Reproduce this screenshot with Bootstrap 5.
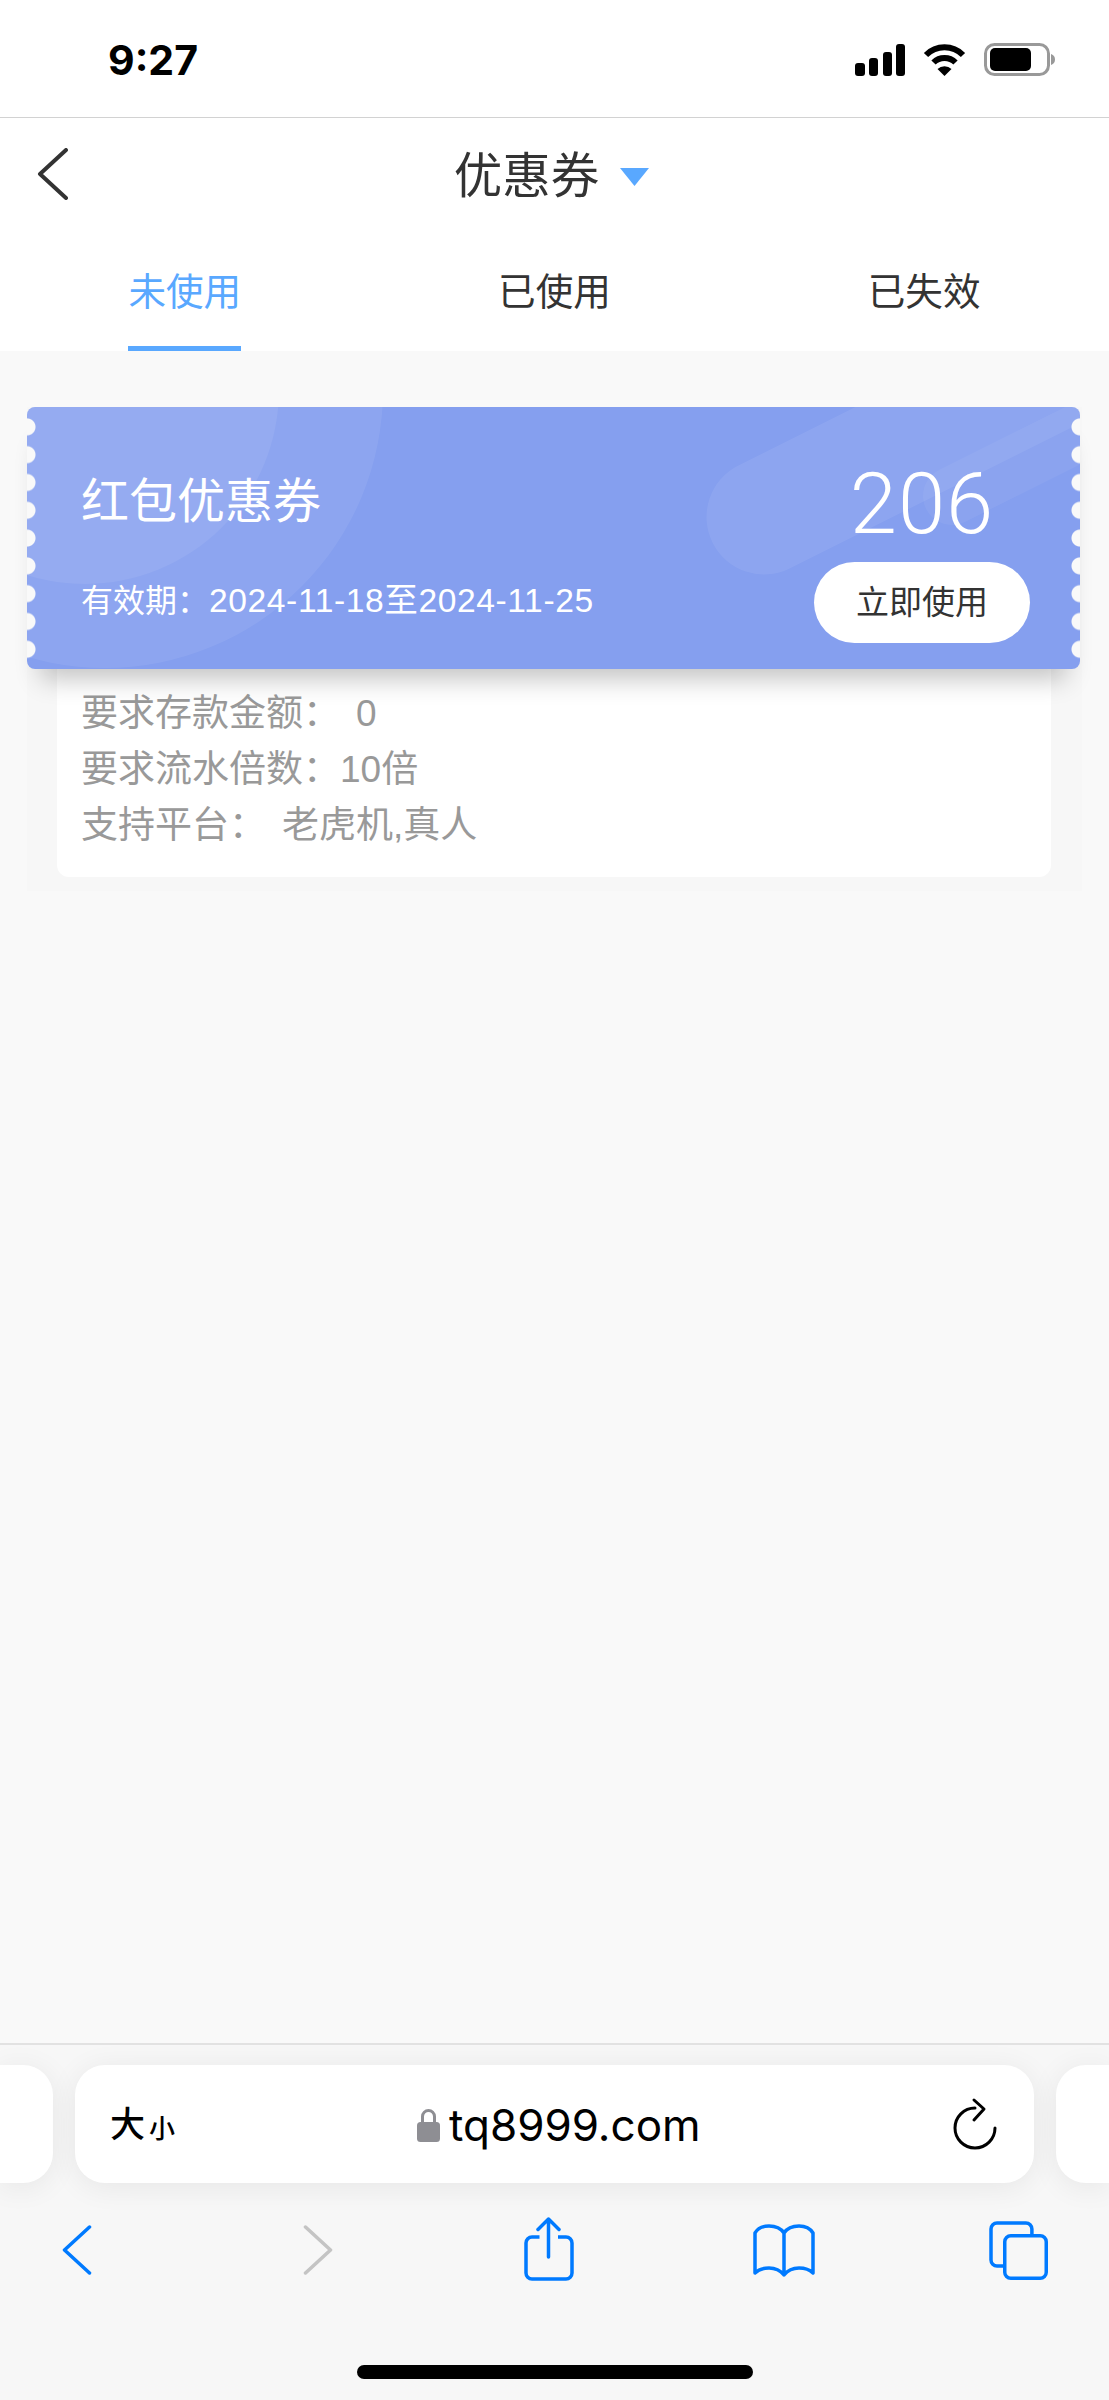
<!DOCTYPE html>
<html lang="zh-CN">
<head>
    <meta charset="UTF-8">
    <meta name="viewport" content="width=device-width, initial-scale=1.0">
    <title>优惠券</title>
    <link href="https://cdn.jsdelivr.net/npm/bootstrap@5.3.0/dist/css/bootstrap.min.css" rel="stylesheet">
    <style>
        body {
            font-family: "Liberation Sans", "Noto Sans CJK SC", sans-serif;
            background: #f9f9f9;
            color: #333;
        }

        .status-bar {
            height: 118px;
            border-bottom: 1px solid #d2d2d2;
            padding: 0 53px 0 108px;
        }

        .status-time {
            font-family: Inter, "Liberation Sans", sans-serif;
            font-weight: 700;
            font-size: 41px;
            line-height: 1;
            color: #000;
            margin-top: 4px;
        }

        .status-icons {
            gap: 18px;
            margin-top: 2px;
        }

        .top-nav {
            height: 112px;
            padding-top: 2px;
        }

        .nav-back {
            left: 37px;
            top: 30px;
        }

        .nav-title {
            font-size: 48.5px;
            line-height: 60px;
            margin-left: -6px;
            margin-top: 2px;
        }

        .nav-caret {
            margin-left: 21px;
            margin-top: 4px;
        }

        .tab-row {
            height: 121px;
        }

        .tab-item {
            width: 33.3333%;
            font-size: 37.6px;
            color: #333;
        }

        .tab-label {
            height: 121px;
            padding-top: 38px;
            line-height: 48px;
        }

        .tab-active .tab-label {
            color: #59a8ff;
            border-bottom: 5px solid #59a8ff;
        }

        .page-main {
            padding: 56px 27px 0;
        }

        .coupon-wrap {
            background: #f7f7f7;
            padding-bottom: 14px;
        }

        .coupon-head {
            height: 262px;
            margin-right: 2px;
            background: #859fef;
            color: #fff;
            border-radius: 8px;
            box-shadow: 0 24px 24px -14px rgba(0, 0, 0, .24);
            z-index: 1;
        }

        .coupon-head::before,
        .coupon-head::after {
            content: "";
            position: absolute;
            top: 6px;
            width: 9px;
            height: 250px;
            background-size: 9px 27.8px;
            background-repeat: repeat-y;
        }

        .coupon-head::before {
            left: 0;
            background-image: radial-gradient(circle at 0 50%, #f9f9f9 8px, transparent 9px);
        }

        .coupon-head::after {
            right: 0;
            background-image: radial-gradient(circle at 100% 50%, #f9f9f9 8px, transparent 9px);
        }

        .coupon-decor {
            inset: 0;
            border-radius: 8px;
        }

        .coupon-left {
            padding: 61px 0 0 54px;
        }

        .coupon-title {
            font-size: 48px;
            line-height: 68px;
        }

        .coupon-date {
            font-size: 32px;
            line-height: 44px;
            margin-top: 43px;
        }

        .date-range {
            font-size: 33.6px;
            letter-spacing: .6px;
        }

        .coupon-right {
            padding: 55px 50px 0 0;
        }

        .coupon-amount {
            font-family: Roboto, "Liberation Sans", sans-serif;
            font-weight: 300;
            font-size: 85px;
            line-height: 84px;
            letter-spacing: 1px;
        }

        .coupon-use {
            width: 216px;
            height: 81px;
            margin-top: 16px;
            padding: 0;
            font-size: 33px;
            color: #333;
            background: #fff;
            border: 0;
        }

        .coupon-body {
            margin: 0 31px 0 30px;
            padding: 17px 24px 23px;
            background: #fff;
            border-radius: 0 0 12px 12px;
            font-size: 37px;
            line-height: 56px;
            color: #999;
        }

        .rule-gap {
            margin-left: 16px;
        }

        .safari-bar {
            background: #f7f7f7;
            border-top: 2px solid #e2e2e2;
            overflow: hidden;
        }

        .url-row {
            gap: 22px;
            margin-top: 20px;
        }

        .url-pill,
        .side-pill {
            height: 118px;
            background: #fff;
            box-shadow: 0 4px 30px rgba(0, 0, 0, .07);
        }

        .url-pill {
            width: 959px;
            flex-shrink: 0;
            border-radius: 30px;
            padding: 0 35px 0 35px;
        }

        .side-pill {
            width: 53px;
            flex-shrink: 0;
        }

        .side-left {
            border-radius: 0 30px 30px 0;
        }

        .side-right {
            border-radius: 30px 0 0 30px;
        }

        .font-big {
            font-size: 35px;
            font-weight: 500;
            color: #000;
            line-height: 1;
        }

        .font-small {
            font-size: 26px;
            line-height: 1;
            font-weight: 500;
            color: #000;
            margin-left: 4px;
        }

        .url-text {
            font-family: Inter, "Liberation Sans", sans-serif;
            font-size: 44px;
            color: #000;
            line-height: 1;
            margin-left: 9px;
        }

        .url-host {
            left: 342px;
            top: 38px;
        }

        .tool-row {
            display: grid;
            grid-template-columns: 154px 328px 134px 336px 132px;
            justify-items: center;
            align-items: center;
            height: 80px;
            margin-top: 27px;
        }

        .home-bar {
            width: 396px;
            height: 14px;
            margin: 75px auto 21px;
            background: #000;
            border-radius: 7px;
        }
    </style>
</head>
<body>
    <div class="d-flex flex-column min-vh-100">
        <!-- status bar -->
        <div class="status-bar bg-white d-flex justify-content-between align-items-center">
            <div class="status-time">9:27</div>
            <div class="status-icons d-flex align-items-center">
                <svg width="50" height="32" viewBox="0 0 50 32" fill="#000">
                    <rect x="0" y="19" width="10" height="13" rx="3"/>
                    <rect x="14" y="14" width="9" height="18" rx="3"/>
                    <rect x="28" y="8" width="9" height="24" rx="3"/>
                    <rect x="41" y="0" width="9" height="32" rx="3"/>
                </svg>
                <svg width="43" height="32" viewBox="0 0 43 32" fill="none" stroke="#000" stroke-width="6">
                    <path d="M3 11A26 26 0 0 1 40 11"/>
                    <path d="M10.5 18.5A15.5 15.5 0 0 1 32.5 18.5"/>
                    <path d="M14.5 25A10 10 0 0 1 28.5 25L21.5 32Z" fill="#000" stroke="none"/>
                </svg>
                <svg width="72" height="33" viewBox="0 0 72 33">
                    <rect x="1.5" y="1.5" width="63" height="30" rx="9" fill="#fff" stroke="#999" stroke-width="3"/>
                    <rect x="6" y="5" width="41" height="23" rx="5" fill="#000"/>
                    <path d="M67 11C70 12 71 14 71 16.5S70 21 67 22Z" fill="#999"/>
                </svg>
            </div>
        </div>

        <!-- page title -->
        <div class="top-nav bg-white position-relative d-flex justify-content-center align-items-center">
            <svg class="nav-back position-absolute" width="31" height="52" viewBox="0 0 31 52" fill="none" stroke="#333" stroke-width="4" stroke-linecap="round" stroke-linejoin="round">
                <path d="M29 2L3 26L29 50"/>
            </svg>
            <span class="nav-title">优惠券</span>
            <svg class="nav-caret" width="29" height="18" viewBox="0 0 29 18" fill="#59a8ff">
                <path d="M0 0H29L14.5 18Z"/>
            </svg>
        </div>

        <!-- tabs -->
        <div class="tab-row bg-white d-flex">
            <div class="tab-item tab-active d-flex justify-content-center"><div class="tab-label">未使用</div></div>
            <div class="tab-item d-flex justify-content-center"><div class="tab-label">已使用</div></div>
            <div class="tab-item d-flex justify-content-center"><div class="tab-label">已失效</div></div>
        </div>

        <!-- coupon list -->
        <div class="page-main flex-grow-1">
            <div class="coupon-wrap">
                <div class="coupon-head position-relative d-flex justify-content-between">
                    <div class="coupon-decor position-absolute overflow-hidden">
                        <svg width="1053" height="262" viewBox="0 0 1053 262" fill="#fff" fill-opacity=".07">
                            <circle cx="78" cy="-17" r="278"/>
                            <circle cx="58" cy="-17" r="194"/>
                            <path d="M737 110L1137 -90" stroke="#fff" stroke-opacity=".07" stroke-width="115" stroke-linecap="round" fill="none"/>
                            <path d="M925 89L1125 -11" stroke="#fff" stroke-opacity=".05" stroke-width="58" stroke-linecap="round" fill="none"/>
                        </svg>
                    </div>
                    <div class="coupon-left position-relative">
                        <div class="coupon-title">红包优惠券</div>
                        <div class="coupon-date">有效期：<span class="date-range">2024-11-18至2024-11-25</span></div>
                    </div>
                    <div class="coupon-right position-relative d-flex flex-column align-items-center">
                        <div class="coupon-amount">206</div>
                        <button class="btn coupon-use rounded-pill" type="button">立即使用</button>
                    </div>
                </div>
                <div class="coupon-body">
                    <div>要求存款金额：<span class="rule-gap">0</span></div>
                    <div>要求流水倍数：10倍</div>
                    <div>支持平台：<span class="rule-gap">老虎机,真人</span></div>
                </div>
            </div>
        </div>

        <!-- browser toolbar -->
        <div class="safari-bar">
            <div class="url-row d-flex justify-content-center">
                <div class="side-pill side-left"></div>
                <div class="url-pill position-relative d-flex align-items-center justify-content-between">
                    <div class="d-flex align-items-end">
                        <span class="font-big">大</span><span class="font-small">小</span>
                    </div>
                    <div class="url-host position-absolute d-flex align-items-center">
                        <svg width="23" height="34" viewBox="0 0 23 34">
                            <path d="M5.5 15V8.5a6 6 0 0 1 12 0V15" fill="none" stroke="#8e8e93" stroke-width="3"/>
                            <rect x="0" y="14" width="23" height="20" rx="3.5" fill="#8e8e93"/>
                        </svg>
                        <span class="url-text">tq8999.com</span>
                    </div>
                    <svg width="46" height="54" viewBox="0 0 46 54" fill="none" stroke="#000" stroke-width="3" stroke-linecap="round" stroke-linejoin="round">
                        <path d="M22 11A20 20 0 1 0 42 31"/>
                        <path d="M21 3L31 12L21 23"/>
                    </svg>
                </div>
                <div class="side-pill side-right"></div>
            </div>
            <div class="tool-row">
                <svg width="30" height="50" viewBox="0 0 30 50" fill="none" stroke="#007aff" stroke-width="3.5" stroke-linecap="round" stroke-linejoin="round">
                    <path d="M27.5 2L2.5 25L27.5 48"/>
                </svg>
                <svg width="30" height="50" viewBox="0 0 30 50" fill="none" stroke="#c4c4c4" stroke-width="3.5" stroke-linecap="round" stroke-linejoin="round">
                    <path d="M2.5 2L27.5 25L2.5 48"/>
                </svg>
                <svg width="52" height="66" viewBox="0 0 52 66" fill="none" stroke="#007aff" stroke-width="3.5" stroke-linecap="round" stroke-linejoin="round">
                    <path d="M16.5 20H9a6 6 0 0 0-6 6V56a6 6 0 0 0 6 6H43a6 6 0 0 0 6-6V26a6 6 0 0 0-6-6H35" stroke-linecap="butt"/>
                    <path d="M25.5 40V2M15 12.5L25.5 2L36 12.5"/>
                </svg>
                <svg width="62" height="53" viewBox="0 0 62 53" fill="none" stroke="#007aff" stroke-width="3.5" stroke-linecap="round" stroke-linejoin="round">
                    <path d="M31 9C27 3 22 2 16 2C10 2 5 4 2 9V49C6 45 11 44 16 44C22 44 27 46 31 51C35 46 40 44 46 44C51 44 56 45 60 49V9C57 4 52 2 46 2C40 2 35 3 31 9V51"/>
                </svg>
                <svg width="59" height="59" viewBox="0 0 59 59" fill="none" stroke="#007aff" stroke-width="3.5">
                    <rect x="15.75" y="14.75" width="41.5" height="42.5" rx="6"/>
                    <path d="M42.9 14.75V8a6 6 0 0 0-6-6H8a6 6 0 0 0-6 6V39a6 6 0 0 0 6 6H15.75"/>
                </svg>
            </div>
            <div class="home-bar"></div>
        </div>
    </div>

    <script src="https://cdn.jsdelivr.net/npm/bootstrap@5.3.0/dist/js/bootstrap.bundle.min.js"></script>
</body>
</html>
